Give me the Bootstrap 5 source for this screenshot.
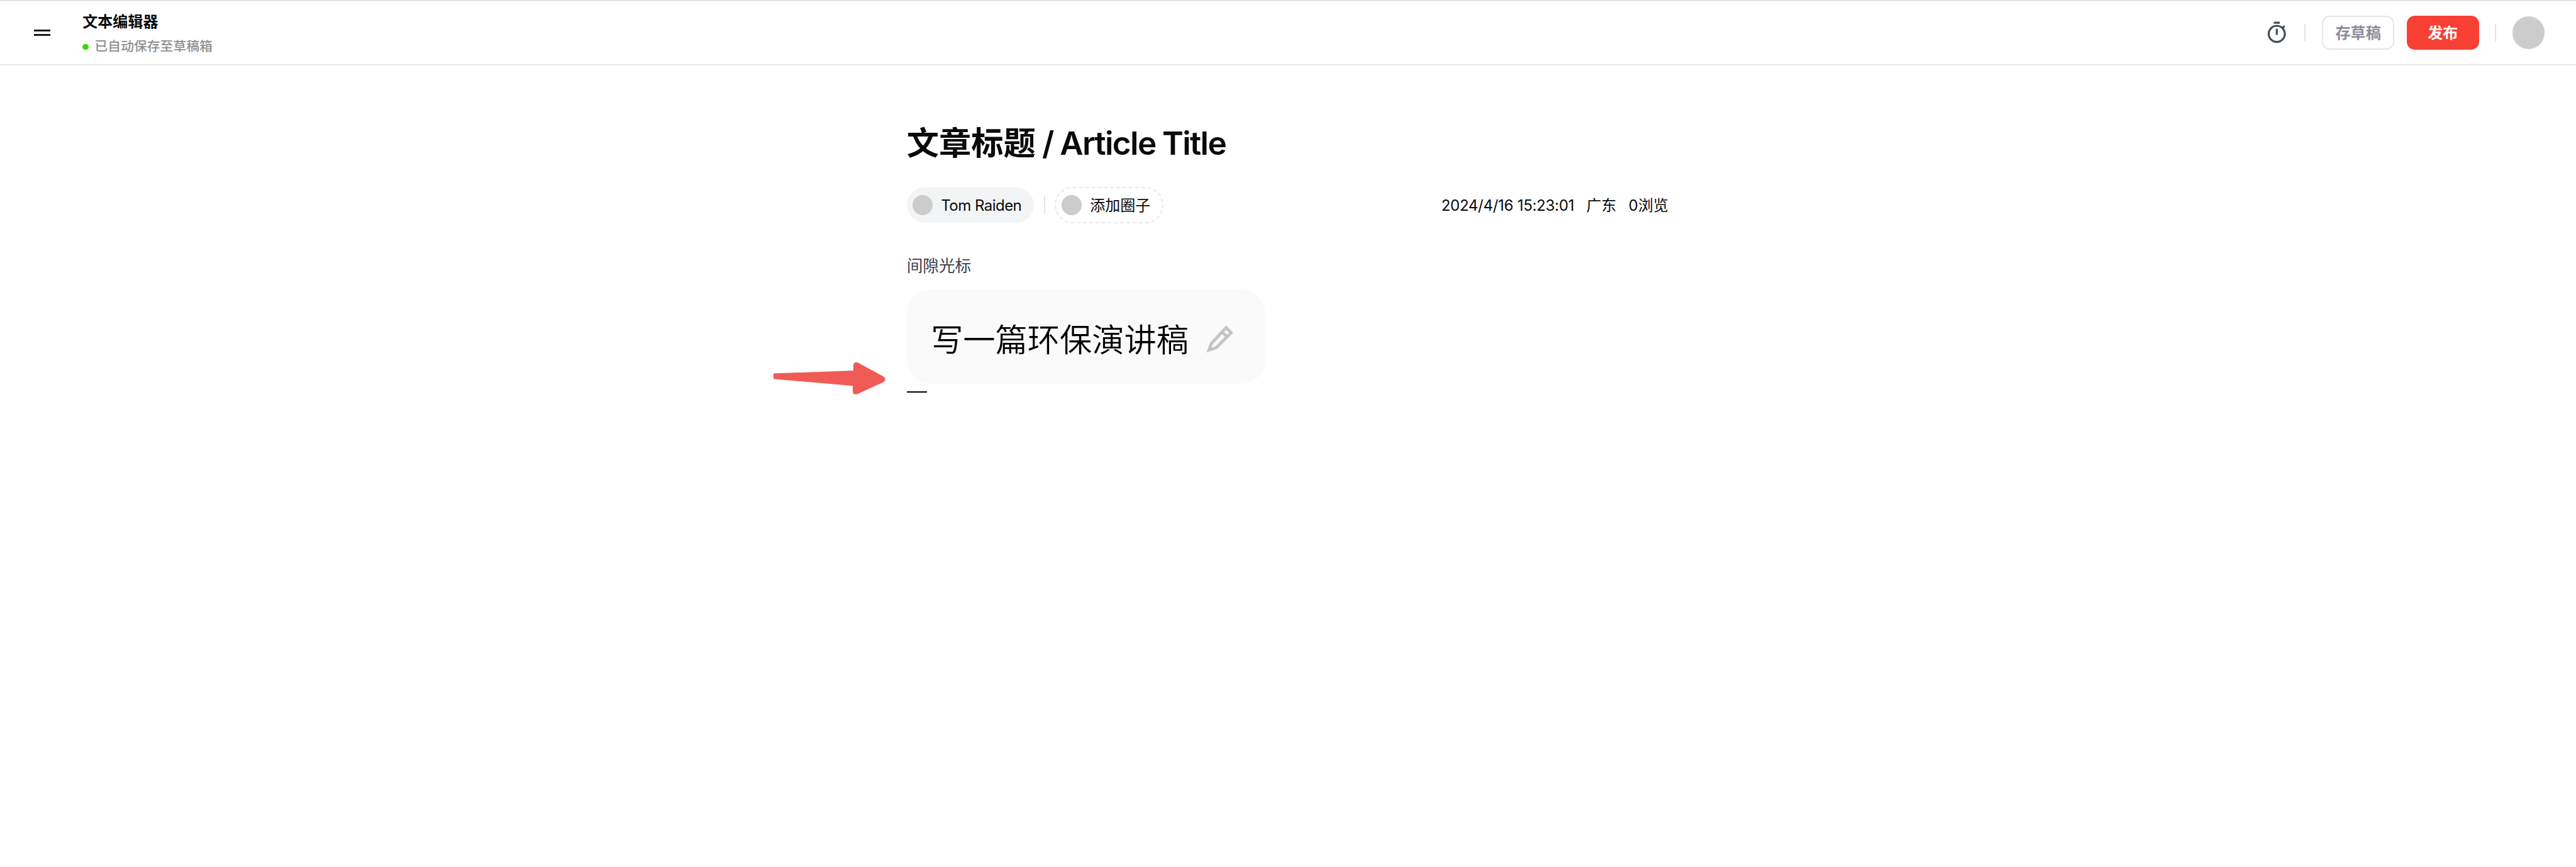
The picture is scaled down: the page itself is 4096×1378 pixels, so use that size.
<!DOCTYPE html>
<html lang="zh-CN">
<head>
<meta charset="utf-8">
<title>文本编辑器</title>
<link href="https://cdn.jsdelivr.net/npm/bootstrap@5.3.0/dist/css/bootstrap.min.css" rel="stylesheet">
<style>
:root{--u:.80094px;font-size:25.63px}
body{font-family:Inter,"Noto Sans CJK SC",sans-serif;color:#0a0a0a;background:#fff;height:1378px;overflow:hidden}
.topbar{height:calc(var(--u)*130);border-top:2px solid #e3e3e3;border-bottom:2px solid #e8e8e8;padding:0 calc(var(--u)*62) 0 calc(var(--u)*68)}
.menu-icon{width:calc(var(--u)*32);height:calc(var(--u)*12);margin-right:calc(var(--u)*64);border-top:calc(var(--u)*4) solid #1a1a1a;border-bottom:calc(var(--u)*4) solid #1a1a1a}
.doc-name{font-size:calc(var(--u)*30);line-height:calc(var(--u)*48);font-weight:600;padding-top:calc(var(--u)*3)}
.doc-state{font-size:calc(var(--u)*26);line-height:calc(var(--u)*40);font-weight:500;color:#8f8f8f;margin-top:calc(var(--u)*5)}
.dot{width:calc(var(--u)*12);height:calc(var(--u)*12);background:#3ad900;margin-right:calc(var(--u)*12)}
.sep{width:2px;height:calc(var(--u)*36);background:#e5e5e5}
.timer{width:calc(var(--u)*48);height:calc(var(--u)*48);margin-right:calc(var(--u)*31)}
.act{width:calc(var(--u)*144);height:calc(var(--u)*68);border-radius:calc(var(--u)*16);font-size:calc(var(--u)*30);line-height:1;padding:calc(var(--u)*2) 0 0;font-weight:600}
.act-draft{border:2px solid #e5e5e5;color:#8e8c99;background:#fff;margin:0 calc(var(--u)*24) 0 calc(var(--u)*32)}
.act-publish{background:#f84035;color:#fff;border:0;margin-right:calc(var(--u)*32)}
.me{width:calc(var(--u)*64);height:calc(var(--u)*64);background:#ccc;margin-left:calc(var(--u)*32)}
.editor{width:calc(var(--u)*1512);margin-left:calc(var(--u)*1800);padding-top:calc(var(--u)*113)}
.title-line{font-size:calc(var(--u)*64);line-height:calc(var(--u)*80);font-weight:600;margin:0 0 calc(var(--u)*48)}
.title-latin{letter-spacing:calc(var(--u)*-2);word-spacing:calc(var(--u)*-1.2)}
.info{height:calc(var(--u)*72);font-size:calc(var(--u)*30);line-height:1}
.chip{height:calc(var(--u)*69);border-radius:calc(var(--u)*36);width:calc(var(--u)*252);background:#f3f4f6;padding-left:calc(var(--u)*12);margin-right:calc(var(--u)*20)}
.chip-add{height:calc(var(--u)*73);width:calc(var(--u)*216);background:none;border:2px dashed #e9e9e9;margin:0 0 0 calc(var(--u)*19)}
.face{width:calc(var(--u)*40);height:calc(var(--u)*40);background:#ccc;margin-right:calc(var(--u)*16)}
.who{letter-spacing:calc(var(--u)*-.65)}
.info span:not(.sep):not(.face){padding-top:calc(var(--u)*2)}
.stats{gap:calc(var(--u)*24)}
.stamp{letter-spacing:calc(var(--u)*-.35)}
.para{font-size:calc(var(--u)*32);line-height:calc(var(--u)*48);color:#374151;margin:calc(var(--u)*61) 0 calc(var(--u)*22)}
.prompt-box{width:calc(var(--u)*712);height:calc(var(--u)*188);border-radius:calc(var(--u)*48);background:#fafafa;padding:calc(var(--u)*12) 0 0 calc(var(--u)*48);color:#000;font-size:calc(var(--u)*64);line-height:1;font-family:"Noto Sans CJK SC",sans-serif;font-weight:350}
.prompt-text{margin-bottom:calc(var(--u)*6)}
.pencil{width:calc(var(--u)*60);height:calc(var(--u)*60);margin-left:calc(var(--u)*35)}
.gap-cursor{width:calc(var(--u)*40);height:2px;background:#000;margin-top:calc(var(--u)*15)}
.pointer{position:absolute;left:calc(var(--u)*1530);top:calc(var(--u)*700);width:calc(var(--u)*250);height:calc(var(--u)*100)}
</style>
</head>
<body>
<header class="topbar d-flex align-items-center">
  <div class="menu-icon"></div>
  <div>
    <div class="doc-name">文本编辑器</div>
    <div class="doc-state d-flex align-items-center"><span class="dot rounded-circle"></span>已自动保存至草稿箱</div>
  </div>
  <div class="d-flex align-items-center ms-auto">
    <svg class="timer" viewBox="0 0 24 24" fill="#424d57"><path d="M9 1h6v2H9zM11 8h2v6h-2zM19.03 7.39l1.42-1.42c-.43-.51-.9-.99-1.41-1.41l-1.42 1.42A9 9 0 1 0 19.03 7.39zM12 20a7 7 0 1 1 0-14 7 7 0 0 1 0 14z"/></svg>
    <span class="sep"></span>
    <button class="btn act act-draft">存草稿</button>
    <button class="btn act act-publish">发布</button>
    <span class="sep"></span>
    <span class="me rounded-circle"></span>
  </div>
</header>
<main class="editor">
  <h1 class="title-line">文章标题<span class="title-latin"> / Article Title</span></h1>
  <div class="info d-flex align-items-center">
    <div class="chip d-flex align-items-center"><span class="face rounded-circle"></span><span class="who">Tom Raiden</span></div>
    <span class="sep"></span>
    <div class="chip chip-add d-flex align-items-center"><span class="face rounded-circle"></span><span>添加圈子</span></div>
    <div class="stats d-flex ms-auto"><span class="stamp">2024/4/16 15:23:01</span><span>广东</span><span>0浏览</span></div>
  </div>
  <p class="para">间隙光标</p>
  <div class="prompt-box d-flex align-items-center"><span class="prompt-text">写一篇环保演讲稿</span>
    <svg class="pencil" viewBox="15 14 60 60" fill="none" stroke="#c4c4c4" stroke-width="6"><path d="M20.500 64.500L25 51.500 54.500 20 64.500 30 35 59.500ZM46.500 28.500L56.500 38.500"/></svg>
  </div>
  <div class="gap-cursor"></div>
</main>
<svg class="pointer" viewBox="0 0 250 100"><path fill="#f05b55" d="M6 40.700L164.700 35V24Q166 17 173.500 19L224 46.500Q231.500 52 225 57.500L173 81.500Q164 84 163.300 76L163.700 65.300 6 51.500Z"/></svg>
<script src="https://cdn.jsdelivr.net/npm/bootstrap@5.3.0/dist/js/bootstrap.bundle.min.js"></script>
</body>
</html>
